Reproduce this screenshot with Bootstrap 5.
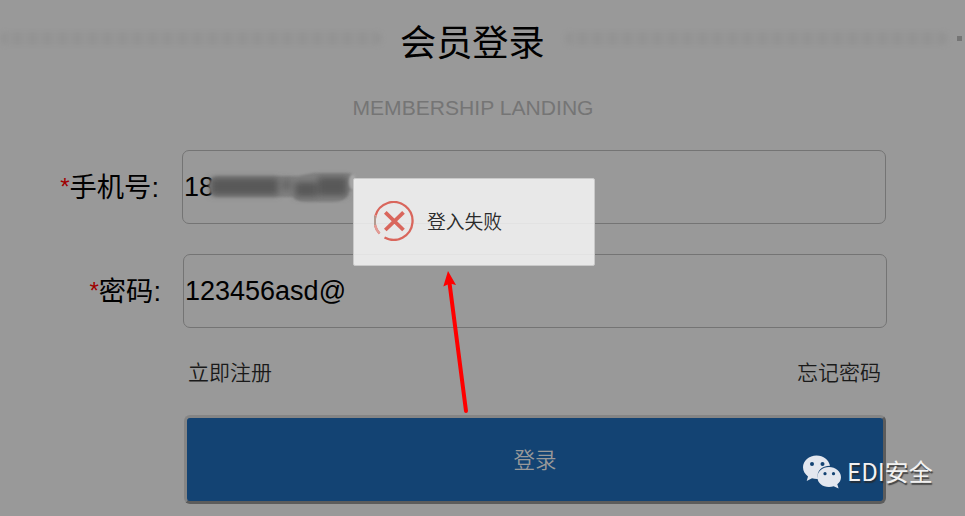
<!DOCTYPE html>
<html lang="zh-CN">
<head>
<meta charset="utf-8">
<meta name="viewport" content="width=device-width, initial-scale=1">
<title>会员登录</title>
<link href="https://cdn.jsdelivr.net/npm/bootstrap@5.3.0/dist/css/bootstrap.min.css" rel="stylesheet">
<style>
body{background:#999;color:#000;font-family:"Liberation Sans","Noto Sans CJK SC",sans-serif;width:965px;height:516px}
.heading{height:84px}
.title{font-size:36.2px;line-height:84px;width:146px;margin:4px 19px 0 18px;white-space:nowrap;font-weight:400}
.rule{height:13px;margin-bottom:7px;border-radius:7px;filter:blur(2px);background:repeating-linear-gradient(90deg,#939393 0 5px,#969696 8px 12px,#939393 15px)}
.rule-left{width:382px}
.rule-right{width:383px}
.rule-end{width:5px;height:5px;background:#757575;margin:0 0 7px 9px}
.subtitle{width:946px;height:46px;line-height:48px;font-size:21.1px;color:#757575;white-space:nowrap}
.login-form{padding-top:20px}
.field{height:74px}
.field-label{width:160px;font-size:27.3px;line-height:76px;white-space:nowrap}
.star{color:#a00000;font-size:24px;position:relative;top:-2px}
.field-box{width:704px;height:74px;border:1px solid #747474;border-radius:7px;font-size:27px;line-height:72px;padding-left:1px}
.field-phone .field-label{width:159px}
.field-phone .field-box{margin-left:23px}
.field-pass{margin-top:30px}
.field-pass .field-label{width:161px}
.field-pass .field-box{margin-left:22px;padding-left:1px}
.smudge{width:148px;height:28px;margin-left:-6px;margin-top:-3px}
.links{margin:30px 84px 0 188px;height:30px;line-height:30px;font-size:21px;color:#1a1a1a;font-weight:350}
.submit{width:702px;height:89px;margin:27px 0 0 184px;background:#134373;border:3px solid;border-color:#858585 #5c5c5c #5c5c5c #858585;border-radius:6px;color:#999;font-size:21.5px;font-weight:350}
.submit span{display:block;padding-top:4px}
.toast-box{left:353px;top:178px;width:242px;height:88px;background:rgba(246,246,246,.85);border:1px solid #c9c9c9;border-radius:2px;padding-left:20px;font-size:18.8px;color:#2a2a2a;font-weight:350}
.toast-box svg{margin-right:13px;margin-top:-2px}
.toast-box span{padding-top:2px}
.arrow{left:430px;top:262px}
.watermark{left:802px;top:452px;height:38px;font-size:24px;color:#f2f2f2;font-family:"Noto Sans CJK SC",sans-serif;text-shadow:1px 2px 1px rgba(40,40,40,.75);white-space:nowrap}
.watermark span{margin-left:4px}
</style>
</head>
<body class="position-relative overflow-hidden">
<main>
  <header class="heading d-flex align-items-center">
    <div class="rule rule-left flex-shrink-0"></div>
    <h1 class="title flex-shrink-0">会员登录</h1>
    <div class="rule rule-right flex-shrink-0"></div>
    <div class="rule-end flex-shrink-0"></div>
  </header>
  <div class="subtitle text-center">MEMBERSHIP LANDING</div>
  <form class="login-form">
    <div class="field field-phone d-flex">
      <label class="field-label text-end"><span class="star">*</span>手机号:</label>
      <div class="field-box d-flex align-items-center"><span>18</span>
        <svg class="smudge" viewBox="0 0 148 28" overflow="visible">
          <defs>
            <filter id="soft" x="-20%" y="-40%" width="140%" height="180%"><feGaussianBlur stdDeviation="1"/></filter>
            <filter id="deep" x="-20%" y="-60%" width="140%" height="220%"><feGaussianBlur stdDeviation="3.4"/></filter>
          </defs>
          <path d="M10 4H90L105 1H140Q149 2 149 10Q149 18 141 19Q139 30 125 30H100Q88 30 85 25H10Q1 24 1 15Q1 5 10 4Z" fill="#808080" filter="url(#soft)"/>
          <g filter="url(#deep)" fill="#595959"><rect x="3" y="6" width="67" height="17"/><rect x="74" y="7" width="9" height="12" opacity=".6"/><rect x="87" y="10" width="22" height="15"/><rect x="110" y="5" width="29" height="19"/></g>
          <ellipse cx="145" cy="10" rx="4" ry="8" fill="#a6a6a6" filter="url(#soft)"/>
        </svg>
      </div>
    </div>
    <div class="field field-pass d-flex">
      <label class="field-label text-end"><span class="star">*</span>密码:</label>
      <div class="field-box">123456asd@</div>
    </div>
    <div class="links d-flex justify-content-between"><span>立即注册</span><span>忘记密码</span></div>
    <button type="button" class="submit d-block p-0"><span>登录</span></button>
  </form>
</main>

<div class="toast-box position-absolute d-flex align-items-center">
  <svg width="40" height="40" viewBox="0 0 40 40" fill="none">
    <path d="M5.5 32.5A18.9 18.9 0 1 1 10.5 36.5" stroke="#d9665c" stroke-width="2.3"/>
    <path d="M5.5 32.5A18.9 18.9 0 0 1 1.8 14" stroke="#e29c96" stroke-width="2.3"/>
    <path d="M1 15V24" stroke="#829a8b" stroke-width="1"/>
    <path d="M11.3 11.3L29.5 29M29.5 11.3L11.3 29" stroke="#d9665c" stroke-width="3.8"/>
  </svg>
  <span>登入失败</span>
</div>

<svg class="arrow position-absolute" width="50" height="155" viewBox="0 0 50 155">
  <path d="M19.5 21L36 149" stroke="#f00" stroke-width="4" stroke-linecap="round"/>
  <path d="M18 9L26 23L20 21.5L13.3 24.5Z" fill="#f00"/>
</svg>

<div class="watermark position-absolute d-flex align-items-center">
  <svg width="41" height="35" viewBox="0 0 41 35">
    <path fill="#e3e7ef" d="M14.5 1.5C7 1.5 1 6.8 1 13.3C1 17 3 20.3 6 22.4L4.7 27L10 24.2C12 24.8 14 25 16 24.9C14 17 20 11.8 28 11.8C27 6 21.500 1.500 14.500 1.500Z"/>
    <path fill="#e3e7ef" d="M27 13C20.500 13 15.400 17.500 15.400 23.200C15.400 28.900 20.500 33 27 33C28.700 33 30.300 32.700 31.700 32.200L36.600 34.500L35.300 30.300C37.600 28.500 39 26 39 23.200C39 17.500 33.500 13 27 13Z"/>
    <g fill="#134373"><circle cx="10" cy="10" r="2"/><circle cx="20.500" cy="10" r="2"/><circle cx="23" cy="19.700" r="1.600"/><circle cx="31.500" cy="19.700" r="1.600"/></g>
  </svg>
  <span>EDI安全</span>
</div>
<script src="https://cdn.jsdelivr.net/npm/bootstrap@5.3.0/dist/js/bootstrap.bundle.min.js"></script>
</body>
</html>
